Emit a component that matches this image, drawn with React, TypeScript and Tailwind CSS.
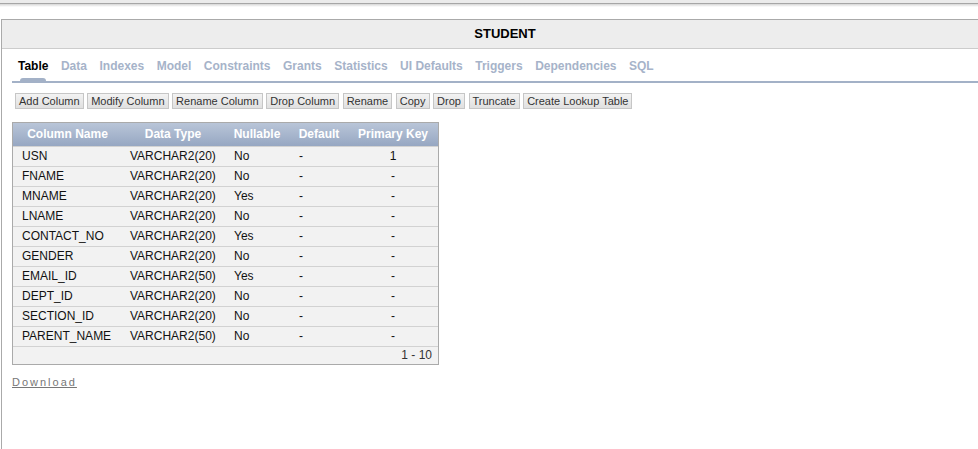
import React from "react";

const rows = [
  ["USN", "VARCHAR2(20)", "No", "-", "1"],
  ["FNAME", "VARCHAR2(20)", "No", "-", "-"],
  ["MNAME", "VARCHAR2(20)", "Yes", "-", "-"],
  ["LNAME", "VARCHAR2(20)", "No", "-", "-"],
  ["CONTACT_NO", "VARCHAR2(20)", "Yes", "-", "-"],
  ["GENDER", "VARCHAR2(20)", "No", "-", "-"],
  ["EMAIL_ID", "VARCHAR2(50)", "Yes", "-", "-"],
  ["DEPT_ID", "VARCHAR2(20)", "No", "-", "-"],
  ["SECTION_ID", "VARCHAR2(20)", "No", "-", "-"],
  ["PARENT_NAME", "VARCHAR2(50)", "No", "-", "-"],
];

const tabs = [
  "Table",
  "Data",
  "Indexes",
  "Model",
  "Constraints",
  "Grants",
  "Statistics",
  "UI Defaults",
  "Triggers",
  "Dependencies",
  "SQL",
];

const buttons = [
  "Add Column",
  "Modify Column",
  "Rename Column",
  "Drop Column",
  "Rename",
  "Copy",
  "Drop",
  "Truncate",
  "Create Lookup Table",
];

export default function App() {
  return (
    <div
      className="w-[978px] h-[449px] overflow-hidden bg-white text-black"
      style={{ fontFamily: '"Liberation Sans", Arial, sans-serif' }}
    >
      {/* top strip */}
      <div className="h-[3px] bg-[#ebebeb]" />
      <div className="h-px bg-[#a6a6a6]" />
      <div className="h-[3px] bg-gradient-to-b from-[#d6d6d6] to-white" />
      <div className="h-[12px]" />

      {/* main panel */}
      <div className="ml-px h-[430px] border-l border-t border-[#aaaaaa]">
        <div className="h-[29px] bg-[#ededed] border-b border-[#cccccc] flex items-center justify-center pl-[30px]">
          <span className="text-[13px] font-bold text-black">STUDENT</span>
        </div>

        <div className="pl-[10px]">
          {/* tabs */}
          <div className="h-[34px] border-b-2 border-[#a3b1c7] flex items-end pl-[6px] gap-[12.5px]">
            {tabs.map((t, i) => (
              <div key={t} className="relative pb-[8px]">
                <span
                  className={
                    "text-[12px] font-bold leading-[14px] block " +
                    (i === 0 ? "text-black" : "text-[#a6b3c9]")
                  }
                >
                  {t}
                </span>
                {i === 0 && (
                  <div className="absolute left-[2px] right-[2px] bottom-0 h-[3px] rounded-t-[3px] bg-[#a3b1c7]" />
                )}
              </div>
            ))}
          </div>

          {/* buttons */}
          <div className="mt-[10px] flex gap-[3.6px] pl-[3px]">
            {buttons.map((b) => (
              <div
                key={b}
                className="h-[16px] px-[3px] flex items-center border border-[#c6c6c6] bg-gradient-to-b from-[#f3f3f3] to-[#e0e0e0] text-[11px] leading-[14px] text-[#333333] whitespace-nowrap"
              >
                {b}
              </div>
            ))}
          </div>

          {/* table */}
          <div className="mt-[13px] w-[427px] border border-[#aaaaaa]">
            <table className="w-full border-collapse table-fixed text-[12px]">
              <colgroup>
                <col className="w-[109px]" />
                <col className="w-[102px]" />
                <col className="w-[66px]" />
                <col className="w-[58px]" />
                <col />
              </colgroup>
              <thead>
                <tr className="h-[23px] bg-gradient-to-b from-[#b9c5d8] to-[#96a7c2]">
                  {["Column Name", "Data Type", "Nullable", "Default", "Primary Key"].map((h) => (
                    <th
                      key={h}
                      className="text-center font-bold text-white text-[12px] p-0 whitespace-nowrap"
                    >
                      {h}
                    </th>
                  ))}
                </tr>
              </thead>
              <tbody>
                {rows.map((r) => (
                  <tr key={r[0]} className="h-[20px] bg-[#f2f2f2] border-t border-[#d2d2d2]">
                    <td className="pl-[9px] p-0 text-[#111111]">{r[0]}</td>
                    <td className="pl-[8px] p-0 text-[#111111]">{r[1]}</td>
                    <td className="pl-[10px] p-0 text-[#111111]">{r[2]}</td>
                    <td className="pl-[9px] p-0 text-[#111111]">{r[3]}</td>
                    <td className="p-0 text-center text-[#111111]">{r[4]}</td>
                  </tr>
                ))}
                <tr className="h-[18px] bg-[#f2f2f2] border-t border-[#d2d2d2]">
                  <td colSpan={5} className="text-right pr-[6px] p-0 leading-[14px] text-[#333333]">
                    1 - 10
                  </td>
                </tr>
              </tbody>
            </table>
          </div>

          {/* download */}
          <div className="mt-[4px]">
            <span className="text-[11px] tracking-[2px] text-[#777777] underline">Download</span>
          </div>
        </div>
      </div>
    </div>
  );
}
